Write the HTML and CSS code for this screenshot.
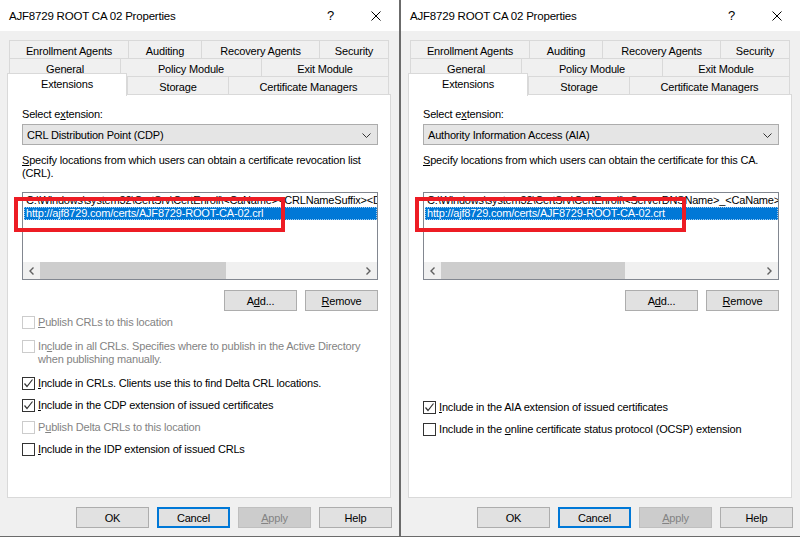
FILE: index.html
```html
<!DOCTYPE html>
<html lang="en">
<head>
    <meta charset="UTF-8">
    <title>AJF8729 ROOT CA 02 Properties</title>
    <link rel="stylesheet" href="styles.css">
</head>
<body>
    <div class="desktop">
        <!-- CDP dialog -->
        <div class="dialog">
            <div class="titlebar">
                <span class="title">AJF8729 ROOT CA 02 Properties</span>
                <span class="tb-btn">?</span>
                <span class="tb-btn">
                    <svg width="10" height="10" viewBox="0 0 10 10"><path d="M0.5 0.5 L9.5 9.5 M9.5 0.5 L0.5 9.5" stroke="#000" stroke-width="1"/></svg>
                </span>
            </div>
            <div class="tabs">
                <div class="tab-row r1">
                    <div class="tab">Enrollment Agents</div>
                    <div class="tab">Auditing</div>
                    <div class="tab">Recovery Agents</div>
                    <div class="tab">Security</div>
                </div>
                <div class="tab-row r2">
                    <div class="tab">General</div>
                    <div class="tab">Policy Module</div>
                    <div class="tab">Exit Module</div>
                </div>
                <div class="tab-row r3">
                    <div class="tab active">Extensions</div>
                    <div class="tab">Storage</div>
                    <div class="tab">Certificate Managers</div>
                </div>
            </div>
            <div class="panel">
                <div class="label">Select e<u>x</u>tension:</div>
                <div class="select">
                    <span>CRL Distribution Point (CDP)</span>
                    <svg width="9" height="5" viewBox="0 0 9 5"><path d="M0.5 0.5 L4.5 4.5 L8.5 0.5" fill="none" stroke="#333" stroke-width="1"/></svg>
                </div>
                <div class="desc"><u>S</u>pecify locations from which users can obtain a certificate revocation list (CRL).</div>
                <div class="listbox">
                    <div class="items">
                        <div class="item">C:\Windows\system32\CertSrv\CertEnroll\&lt;CaName&gt;&lt;CRLNameSuffix&gt;&lt;DeltaCRLAllowed&gt;.crl</div>
                        <div class="item selected">http://ajf8729.com/certs/AJF8729-ROOT-CA-02.crl</div>
                    </div>
                    <div class="scrollbar">
                        <span class="sb-arrow"><svg width="5" height="8" viewBox="0 0 5 8"><path d="M4.5 0.5 L1 4 L4.5 7.5" fill="none" stroke="#606060" stroke-width="1.4"/></svg></span>
                        <div class="sb-track"><div class="sb-thumb"></div></div>
                        <span class="sb-arrow"><svg width="5" height="8" viewBox="0 0 5 8"><path d="M0.5 0.5 L4 4 L0.5 7.5" fill="none" stroke="#606060" stroke-width="1.4"/></svg></span>
                    </div>
                    <div class="highlight"></div>
                </div>
                <div class="list-buttons">
                    <button class="btn">A<u>d</u>d...</button>
                    <button class="btn"><u>R</u>emove</button>
                </div>
                <div class="checks">
                    <div class="check disabled"><span class="box"></span><span><u>P</u>ublish CRLs to this location</span></div>
                    <div class="check disabled wide"><span class="box"></span><span>In<u>c</u>lude in all CRLs. Specifies where to publish in the Active Directory when publishing manually.</span></div>
                    <div class="check wider"><span class="box checked"><svg width="11" height="11" viewBox="0 0 11 11"><path d="M1.5 5.5 L4 8.5 L9.5 1.5" fill="none" stroke="#333" stroke-width="1.2"/></svg></span><span><u>I</u>nclude in CRLs. Clients use this to find Delta CRL locations.</span></div>
                    <div class="check"><span class="box checked"><svg width="11" height="11" viewBox="0 0 11 11"><path d="M1.5 5.5 L4 8.5 L9.5 1.5" fill="none" stroke="#333" stroke-width="1.2"/></svg></span><span><u>I</u>nclude in the CDP extension of issued certificates</span></div>
                    <div class="check disabled"><span class="box"></span><span>P<u>u</u>blish Delta CRLs to this location</span></div>
                    <div class="check"><span class="box"></span><span><u>I</u>nclude in the IDP extension of issued CRLs</span></div>
                </div>
            </div>
            <div class="footer">
                <button class="btn">OK</button>
                <button class="btn focused">Cancel</button>
                <button class="btn" disabled><u>A</u>pply</button>
                <button class="btn">Help</button>
            </div>
        </div>

        <!-- AIA dialog -->
        <div class="dialog">
            <div class="titlebar">
                <span class="title">AJF8729 ROOT CA 02 Properties</span>
                <span class="tb-btn">?</span>
                <span class="tb-btn">
                    <svg width="10" height="10" viewBox="0 0 10 10"><path d="M0.5 0.5 L9.5 9.5 M9.5 0.5 L0.5 9.5" stroke="#000" stroke-width="1"/></svg>
                </span>
            </div>
            <div class="tabs">
                <div class="tab-row r1">
                    <div class="tab">Enrollment Agents</div>
                    <div class="tab">Auditing</div>
                    <div class="tab">Recovery Agents</div>
                    <div class="tab">Security</div>
                </div>
                <div class="tab-row r2">
                    <div class="tab">General</div>
                    <div class="tab">Policy Module</div>
                    <div class="tab">Exit Module</div>
                </div>
                <div class="tab-row r3">
                    <div class="tab active">Extensions</div>
                    <div class="tab">Storage</div>
                    <div class="tab">Certificate Managers</div>
                </div>
            </div>
            <div class="panel">
                <div class="label">Select e<u>x</u>tension:</div>
                <div class="select">
                    <span>Authority Information Access (AIA)</span>
                    <svg width="9" height="5" viewBox="0 0 9 5"><path d="M0.5 0.5 L4.5 4.5 L8.5 0.5" fill="none" stroke="#333" stroke-width="1"/></svg>
                </div>
                <div class="desc"><u>S</u>pecify locations from which users can obtain the certificate for this CA.</div>
                <div class="listbox">
                    <div class="items">
                        <div class="item">C:\Windows\system32\CertSrv\CertEnroll\&lt;ServerDNSName&gt;_&lt;CaName&gt;&lt;CertificateName&gt;.crt</div>
                        <div class="item selected">http://ajf8729.com/certs/AJF8729-ROOT-CA-02.crt</div>
                    </div>
                    <div class="scrollbar">
                        <span class="sb-arrow"><svg width="5" height="8" viewBox="0 0 5 8"><path d="M4.5 0.5 L1 4 L4.5 7.5" fill="none" stroke="#606060" stroke-width="1.4"/></svg></span>
                        <div class="sb-track"><div class="sb-thumb aia"></div></div>
                        <span class="sb-arrow"><svg width="5" height="8" viewBox="0 0 5 8"><path d="M0.5 0.5 L4 4 L0.5 7.5" fill="none" stroke="#606060" stroke-width="1.4"/></svg></span>
                    </div>
                    <div class="highlight"></div>
                </div>
                <div class="list-buttons">
                    <button class="btn">A<u>d</u>d...</button>
                    <button class="btn"><u>R</u>emove</button>
                </div>
                <div class="checks aia">
                    <div class="check"><span class="box checked"><svg width="11" height="11" viewBox="0 0 11 11"><path d="M1.5 5.5 L4 8.5 L9.5 1.5" fill="none" stroke="#333" stroke-width="1.2"/></svg></span><span><u>I</u>nclude in the AIA extension of issued certificates</span></div>
                    <div class="check"><span class="box"></span><span>Include in the <u>o</u>nline certificate status protocol (OCSP) extension</span></div>
                </div>
            </div>
            <div class="footer">
                <button class="btn">OK</button>
                <button class="btn focused">Cancel</button>
                <button class="btn" disabled><u>A</u>pply</button>
                <button class="btn">Help</button>
            </div>
        </div>
    </div>
</body>
</html>
```

FILE: styles.css
```css
* {
    box-sizing: border-box;
}

body {
    margin: 0;
    background-color: #6b6b6b;
    font-family: 'Liberation Sans', Arial, sans-serif;
    font-size: 11px;
    letter-spacing: -0.18px;
    color: #000000;
}

.desktop {
    display: flex;
    gap: 2px;
    height: 536px;
}

.dialog {
    width: 399px;
    height: 536px;
    background-color: #F0F0F0;
    display: flex;
    flex-direction: column;
}

/* title bar */
.titlebar {
    height: 31px;
    flex: none;
    background-color: #FFFFFF;
    display: flex;
    align-items: center;
    padding-left: 9px;
    padding-right: 1px;
    font-size: 11.5px;
    letter-spacing: -0.2px;
}

.title {
    flex: 1;
    padding-top: 1px;
}

.tb-btn {
    width: 45px;
    height: 31px;
    display: flex;
    justify-content: center;
    align-items: center;
    font-size: 13px;
}

/* tabs */
.tabs {
    margin: 9px 0 0 9px;
    width: 380px;
}

.tab-row {
    display: grid;
    height: 18px;
}

.tab-row.r1 { grid-template-columns: 119px 73px 118px 70px; }
.tab-row.r2 { grid-template-columns: 111px 141px 128px; }
.tab-row.r3 { grid-template-columns: 118px 101px 161px; }

.tab {
    border-top: 1px solid #D9D9D9;
    border-left: 1px solid #D9D9D9;
    background-color: #F0F0F0;
    text-align: center;
    padding-top: 2px;
    line-height: 16px;
    white-space: nowrap;
}

.tab:last-child {
    border-right: 1px solid #D9D9D9;
}

.tab.active {
    position: relative;
    z-index: 1;
    margin: -3px 0 -1px -2px;
    background-color: #FFFFFF;
    border-right: 1px solid #D9D9D9;
    padding-top: 2px;
}

/* tab page */
.panel {
    margin-left: 7px;
    width: 384px;
    height: 404px;
    flex: none;
    background-color: #FFFFFF;
    border: 1px solid #D9D9D9;
    padding: 13px 12px 0 14px;
    line-height: 13px;
}

.select {
    margin-top: 3px;
    height: 21px;
    background-color: #E5E5E5;
    border: 1px solid #ACACAC;
    display: flex;
    align-items: center;
    justify-content: space-between;
    padding: 1px 6px 0 4px;
}

.desc {
    margin-top: 9px;
    height: 26px;
}

.listbox {
    position: relative;
    margin-top: 12px;
    height: 88px;
    border: 1px solid #828790;
    display: flex;
    flex-direction: column;
}

.items {
    flex: 1;
    padding: 1px 0 0 1px;
    overflow: hidden;
}

.item {
    height: 13px;
    padding-left: 2px;
    white-space: nowrap;
    overflow: hidden;
}

.item.selected {
    background-color: #0078D7;
    color: #FFFFFF;
    outline: 1px dotted #9FCBF0;
    outline-offset: -1px;
}

.scrollbar {
    height: 17px;
    display: flex;
    background-color: #F0F0F0;
}

.sb-arrow {
    width: 17px;
    display: flex;
    justify-content: center;
    align-items: center;
}

.sb-track {
    flex: 1;
}

.sb-thumb {
    width: 186px;
    height: 100%;
    background-color: #CDCDCD;
}

.sb-thumb.aia {
    width: 184px;
}

/* red annotation box drawn over the list */
.highlight {
    position: absolute;
    left: -9px;
    top: 4px;
    width: 271px;
    height: 35px;
    border: 4px solid #ED1C24;
}

.list-buttons {
    margin-top: 10px;
    display: flex;
    justify-content: flex-end;
    gap: 8px;
}

.btn {
    width: 73px;
    height: 21px;
    padding: 0;
    background-color: #E1E1E1;
    border: 1px solid #ADADAD;
    font-family: inherit;
    font-size: 11px;
    letter-spacing: inherit;
    color: #000000;
}

.btn.focused {
    border: 2px solid #0078D7;
}

.btn:disabled {
    background-color: #CCCCCC;
    border-color: #BFBFBF;
    color: #838383;
}

/* check boxes */
.checks {
    margin-top: 5px;
}

.checks.aia {
    margin-top: 90px;
}

.check {
    display: flex;
    align-items: flex-start;
    gap: 3px;
    margin-top: 9px;
}

.check:first-child {
    margin-top: 0;
}

.check.wide {
    margin-top: 11px;
}

.check.wider {
    margin-top: 11px;
}

.box {
    flex: none;
    width: 13px;
    height: 13px;
    border: 1px solid #333333;
    background-color: #FFFFFF;
    display: flex;
    justify-content: center;
    align-items: center;
}

.check.disabled {
    color: #838383;
}

.check.disabled .box {
    border-color: #CCCCCC;
}

/* dialog buttons */
.footer {
    margin-top: 9px;
    display: flex;
    justify-content: flex-end;
    gap: 8px;
    padding-right: 7px;
}
```
